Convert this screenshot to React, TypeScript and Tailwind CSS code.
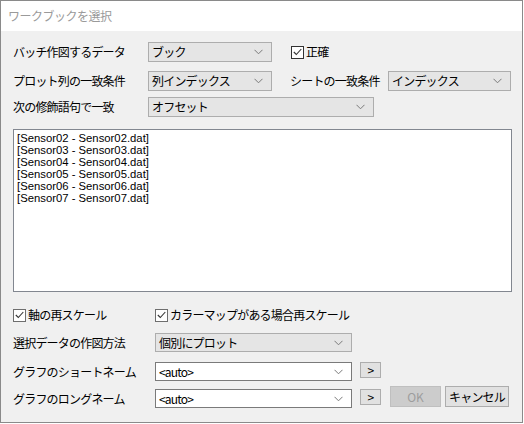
import React from "react";

const FONT = { fontFamily: '"Noto Sans CJK JP", "Liberation Sans", sans-serif' };

function Chevron() {
  return (
    <svg width="9" height="6" viewBox="0 0 9 6" className="absolute right-[8px] top-1/2 -translate-y-1/2">
      <polyline points="0.5,0.8 4.5,4.8 8.5,0.8" fill="none" stroke="#7a7a7a" strokeWidth="1" />
    </svg>
  );
}

function Combo({ text, w, h = 20, white = false }: { text: string; w: number; h?: number; white?: boolean }) {
  return (
    <div
      className={
        "relative flex items-center pl-[3px] text-[12px] text-black leading-none " +
        (white ? "bg-white border border-[#7a7a7a]" : "bg-[#e5e5e5] border border-[#adadad]")
      }
      style={{ width: w, height: h }}
    >
      <span className="whitespace-nowrap">{text}</span>
      <Chevron />
    </div>
  );
}

function Check({ dark = true }: { dark?: boolean }) {
  return (
    <div
      className={
        "w-[13px] h-[13px] bg-white border flex items-center justify-center shrink-0 " +
        (dark ? "border-[#333333]" : "border-[#6e6e6e]")
      }
    >
      <svg width="9" height="8" viewBox="0 0 9 8">
        <polyline points="0.8,4 3.3,6.5 8.3,1" fill="none" stroke="#333" strokeWidth="1.1" />
      </svg>
    </div>
  );
}

function SmallBtn() {
  return (
    <div className="w-[21px] h-[16px] bg-[#e1e1e1] border border-[#adadad] flex items-center justify-center text-[12px] leading-none text-black">
      &gt;
    </div>
  );
}

export default function App() {
  const items = ["02", "03", "04", "05", "06", "07"];
  return (
    <div className="w-[524px] h-[424px] bg-white" style={FONT}>
      <div className="w-[523px] h-[423px] border border-[#8a8a8a] flex flex-col">
        <div className="h-[30px] bg-white flex items-center pl-[7px] text-[12px] text-[#9a9a9a] shrink-0 tracking-[-0.5px]">
          ワークブックを選択
        </div>
        <div className="flex-1 bg-[#f0f0f0] pl-[12px] flex flex-col text-[12px] text-black tracking-[-0.8px]">
          {/* Row 1 */}
          <div className="mt-[11px] h-[20px] flex items-center">
            <div className="w-[135px] whitespace-nowrap">バッチ作図するデータ</div>
            <Combo text="ブック" w={124} />
            <div className="ml-[19px] flex items-center gap-[2px]">
              <Check />
              <span>正確</span>
            </div>
          </div>
          {/* Row 2 */}
          <div className="mt-[9px] h-[20px] flex items-center">
            <div className="w-[135px] whitespace-nowrap">プロット列の一致条件</div>
            <Combo text="列インデックス" w={124} />
            <div className="ml-[18px] w-[98px] whitespace-nowrap">シートの一致条件</div>
            <Combo text="インデックス" w={123} />
          </div>
          {/* Row 3 */}
          <div className="mt-[6px] h-[20px] flex items-center">
            <div className="w-[135px] whitespace-nowrap">次の修飾語句で一致</div>
            <Combo text="オフセット" w={226} />
          </div>
          {/* List */}
          <div className="mt-[12px] w-[499px] h-[163px] bg-white border border-[#828790] pl-[3px] pt-[2px] tracking-normal">
            {items.map((n) => (
              <div
                key={n}
                className="text-[11.3px] leading-[12px] whitespace-nowrap"
                style={{ fontFamily: '"Liberation Sans", sans-serif' }}
              >
                [Sensor{n} - Sensor{n}.dat]
              </div>
            ))}
          </div>
          {/* Checkboxes */}
          <div className="mt-[15px] h-[16px] flex items-center">
            <div className="w-[142px] flex items-center gap-[2px]">
              <Check dark={false} />
              <span className="whitespace-nowrap">軸の再スケール</span>
            </div>
            <div className="flex items-center gap-[2px]">
              <Check dark={false} />
              <span className="whitespace-nowrap">カラーマップがある場合再スケール</span>
            </div>
          </div>
          {/* Plot method */}
          <div className="mt-[10px] h-[19px] flex items-center">
            <div className="w-[142px] whitespace-nowrap">選択データの作図方法</div>
            <Combo text="個別にプロット" w={197} h={19} />
          </div>
          {/* Short name */}
          <div className="mt-[10px] h-[19px] flex items-start">
            <div className="w-[142px] h-[19px] flex items-center whitespace-nowrap">グラフのショートネーム</div>
            <Combo text="<auto>" w={197} h={19} white />
            <div className="ml-[8px]">
              <SmallBtn />
            </div>
          </div>
          {/* Long name */}
          <div className="mt-[5px] h-[22px] flex items-end">
            <div className="w-[142px] h-[19px] flex items-center whitespace-nowrap">グラフのロングネーム</div>
            <div className="flex items-start h-[19px]">
              <Combo text="<auto>" w={197} h={19} white />
              <div className="ml-[8px]">
                <SmallBtn />
              </div>
            </div>
            <div className="self-start ml-[9px] w-[51px] h-[21px] bg-[#cccccc] border border-[#bfbfbf] flex items-center justify-center text-[#9d9d9d] tracking-normal">
              OK
            </div>
            <div className="self-start ml-[4px] w-[64px] h-[21px] bg-[#e1e1e1] border border-[#adadad] flex items-center justify-center">
              キャンセル
            </div>
          </div>
        </div>
      </div>
    </div>
  );
}
